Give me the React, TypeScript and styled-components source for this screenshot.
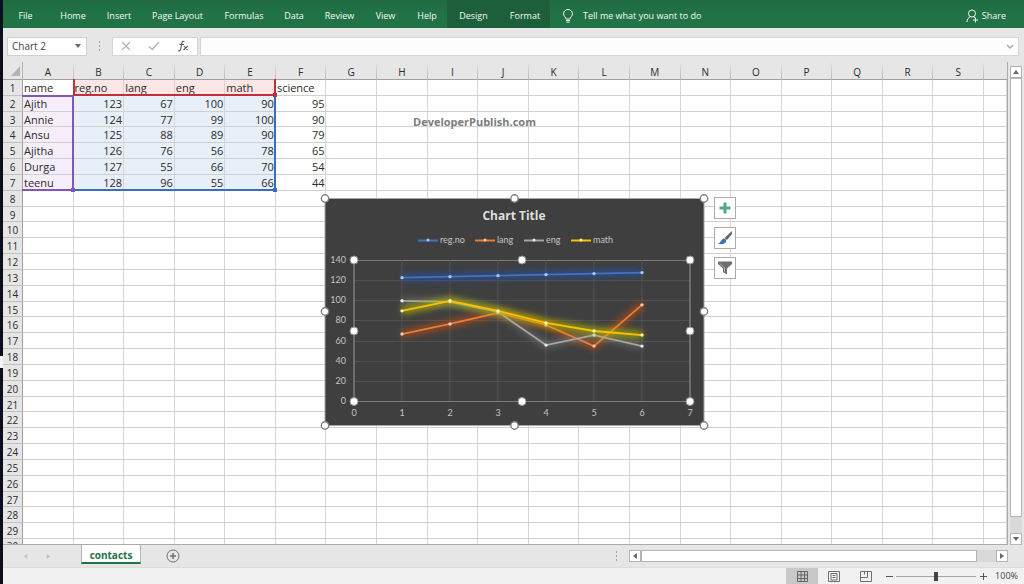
import React from "react";
import styled, { createGlobalStyle, css } from "styled-components";

const ui = `"Open Sans", "Noto Sans", sans-serif`;
const TRACKS = css`
  display: grid;
  grid-template-columns: 20px repeat(19, minmax(0, 1fr)) 23px;
`;
const ROWS = css`
  grid-template-rows: repeat(29, minmax(0, 1fr)) 5px;
`;

const Global = createGlobalStyle`
  * { box-sizing: border-box; }
  body { margin: 0; font-family: ${ui}; background: #e6e6e6; }
  button, input { font-family: inherit; margin: 0; padding: 0; border: 0; background: none; color: inherit; }
`;

const Page = styled.div`
  height: 100vh;
  display: flex;
  padding-left: 3px;
  overflow: hidden;
  background: linear-gradient(#0b0e1c 61%, #f4f4f4 61%, #f4f4f4 63%, #0b0e1c 63%);
`;
const Window = styled.div`
  flex: 1;
  min-width: 0;
  display: flex;
  flex-direction: column;
  background: #e6e6e6;
`;

const Ribbon = styled.nav`
  flex: none;
  height: 28px;
  display: flex;
  align-items: stretch;
  background: linear-gradient(#206b42, #217346 50%);
  color: #f4faf6;
`;
const RibbonTab = styled.button<{ $w: number; $context?: boolean }>`
  width: ${(p) => p.$w}px;
  padding-top: 3px;
  font-size: 9px;
  white-space: nowrap;
  background: ${(p) => (p.$context ? "#1c5f3a" : "none")};
`;
const RibbonAction = styled.button`
  display: flex;
  align-items: center;
  gap: 9px;
  padding: 3px 0 0 12px;
  font-size: 9px;
`;
const ShareAction = styled(RibbonAction)`
  margin-left: auto;
  padding: 3px 18px 0 0;
  gap: 3px;
`;

const FormulaBar = styled.div`
  flex: none;
  height: 34px;
  display: flex;
  align-items: center;
  padding: 2px 5px 0 4px;
`;
const NameBox = styled.div`
  width: 80px;
  height: 19px;
  display: flex;
  align-items: center;
  background: #fff;
  border: 1px solid #cfcfcf;
  color: #444;
`;
const NameInput = styled.input`
  flex: 1;
  min-width: 0;
  padding-left: 4px;
  font-size: 10px;
`;
const DropButton = styled.button`
  width: 16px;
  display: flex;
  justify-content: center;
`;
const Grip = styled.span`
  width: 25px;
  display: flex;
  flex-direction: column;
  align-items: center;
  gap: 2px;
  i { width: 1px; height: 2px; background: #a0a0a0; }
`;
const FormulaTools = styled.div`
  width: 86px;
  height: 19px;
  display: flex;
  align-items: center;
  justify-content: space-around;
  background: #fff;
  border: 1px solid #d4d4d4;
  button { display: flex; }
`;
const FormulaField = styled.div`
  flex: 1;
  height: 19px;
  margin-left: 2px;
  display: flex;
  background: #fdfdfd;
  border: 1px solid #d4d4d4;
  input { flex: 1; min-width: 0; font-size: 11px; }
`;

const Body = styled.main`
  flex: 1;
  min-height: 0;
  display: flex;
`;
const Sheet = styled.div`
  position: relative;
  flex: 1;
  min-width: 0;
  display: flex;
  border-right: 1px solid #ababab;
  border-bottom: 1px solid #ababab;
`;
const Grid = styled.table`
  flex: 1;
  min-width: 0;
  display: flex;
  flex-direction: column;
  font-size: 11px;
  color: #2b2b2b;
`;
const Head = styled.thead`
  flex: none;
  height: 18px;
  display: block;
`;
const HeadRow = styled.tr`
  ${TRACKS}
  height: 18px;
  border-bottom: 1px solid #a0a0a0;
`;
const ColHead = styled.th`
  padding: 2px 0 0;
  font-size: 10px;
  font-weight: 400;
  line-height: 16px;
  text-align: center;
  border-right: 1px solid;
  border-image: linear-gradient(#e6e6e6, #b4b4b4) 1;
`;
const Corner = styled.td`
  padding: 4px 2px 2px 8px;
  border-right: 1px solid #b4b4b4;
  svg { display: block; }
`;
const Rows = styled.tbody`
  flex: 1;
  min-height: 0;
  display: grid;
  ${ROWS}
`;
const Row = styled.tr`
  ${TRACKS}
  min-height: 0;
  overflow: hidden;
`;
const RowHead = styled.th`
  padding: 0;
  font-size: 10px;
  font-weight: 400;
  line-height: 16px;
  text-align: center;
  overflow: hidden;
  background: #e6e6e6;
  border-right: 1px solid #a0a0a0;
  border-bottom: 1px solid #c0c0c0;
  tr:last-child > & { border-bottom: 0; line-height: 14px; }
`;
const fills = { none: "#fff", names: "#f6eefa", heads: "#fde6e6", values: "#e7eff9" };
const Cell = styled.td<{ $fill: keyof typeof fills; $num: boolean }>`
  padding: 0 1px;
  line-height: 16px;
  overflow: hidden;
  white-space: nowrap;
  text-align: ${(p) => (p.$num ? "right" : "left")};
  background: ${(p) => fills[p.$fill]};
  border-right: 1px solid #d6d6d6;
  border-bottom: 1px solid #d0d0d0;
  tr:last-child > & { border-bottom: 0; }
`;

const Overlay = styled.div`
  position: absolute;
  inset: 18px 0 0 0;
  ${TRACKS}
  ${ROWS}
  pointer-events: none;
`;
const RangeMark = styled.div<{ $area: string; $color: string; $sides: string }>`
  position: relative;
  grid-area: ${(p) => p.$area};
  margin: -1px 0 0 -1px;
  border: 0 solid ${(p) => p.$color};
  border-width: ${(p) => p.$sides};
  &::after {
    content: "";
    position: absolute;
    right: -3px;
    bottom: -3px;
    width: 4px;
    height: 4px;
    background: ${(p) => p.$color};
  }
`;
const Watermark = styled.div`
  position: absolute;
  left: 410px;
  top: 52px;
  font: 700 11px/16px ${ui};
  color: #7c7c7c;
`;
const ChartObject = styled.figure`
  position: absolute;
  left: 314px;
  top: 128px;
  margin: 0;
  svg { display: block; }
`;
const ChartTools = styled.div`
  position: absolute;
  left: 711px;
  top: 135px;
  display: flex;
  flex-direction: column;
  gap: 8px;
`;
const ChartTool = styled.button`
  width: 22px;
  height: 22px;
  display: flex;
  align-items: center;
  justify-content: center;
  background: #fff;
  border: 1px solid #ababab;
`;

const VScroll = styled.div`
  width: 16px;
  padding: 4px 2px 0 2px;
  display: flex;
  flex-direction: column;
`;
const ScrollButton = styled.button`
  flex: none;
  width: 12px;
  height: 12px;
  display: flex;
  align-items: center;
  justify-content: center;
  background: #fff;
  border: 1px solid #b4b4b4;
`;
const VTrack = styled.div`
  flex: 1;
  display: flex;
  background: #d9d9d9;
  padding-bottom: 16px;
`;
const Thumb = styled.div`
  flex: 1;
  background: #fff;
  border: 1px solid #b4b4b4;
`;

const TabBar = styled.div`
  flex: none;
  height: 22px;
  display: flex;
  align-items: flex-start;
  padding-right: 16px;
`;
const TabNav = styled.div`
  width: 78px;
  height: 22px;
  display: flex;
  align-items: center;
  gap: 18px;
  padding-left: 20px;
  button { display: flex; }
`;
const SheetTab = styled.button`
  width: 60px;
  height: 20px;
  margin-top: -1px;
  padding-top: 3px;
  background: #fff;
  border-left: 1px solid #b4b4b4;
  border-right: 1px solid #b4b4b4;
  border-bottom: 2px solid #217346;
  color: #217346;
  font-size: 10px;
  line-height: 14px;
  font-weight: 700;
`;
const AddSheet = styled.button`
  margin: 4px 0 0 25px;
  display: flex;
`;
const HScroll = styled.div`
  width: 404px;
  max-width: 45%;
  height: 22px;
  margin-left: auto;
  display: flex;
  align-items: center;
`;
const HTrack = styled.div`
  flex: 1;
  height: 12px;
  display: flex;
  background: #d9d9d9;
  padding-right: 19px;
`;

const StatusBar = styled.footer`
  flex: none;
  height: 17px;
  display: flex;
  justify-content: flex-end;
  background: #f1f1f1;
  color: #444;
  font-size: 9px;
  border-top: 1px solid #dcdcdc;
`;
const ViewButton = styled.button<{ $on?: boolean }>`
  width: 32px;
  display: flex;
  align-items: center;
  justify-content: center;
  background: ${(p) => (p.$on ? "#c8c8c8" : "none")};
`;
const ZoomStep = styled.button`
  width: 14px;
  display: flex;
  align-items: center;
  justify-content: center;
`;
const ZoomSlider = styled.input`
  appearance: none;
  width: 80px;
  &::-webkit-slider-runnable-track {
    height: 11px;
    background: linear-gradient(#a6a6a6, #a6a6a6) center / 100% 1px no-repeat;
  }
  &::-webkit-slider-thumb {
    appearance: none;
    width: 4px;
    height: 9px;
    margin-top: 1px;
    background: #444;
  }
`;
const ZoomValue = styled.span`
  width: 34px;
  padding: 0 6px 0 0;
  line-height: 16px;
  text-align: right;
`;

const tabs: [string, number][] = [
  ["File", 45], ["Home", 50], ["Insert", 42], ["Page Layout", 75], ["Formulas", 58],
  ["Data", 42], ["Review", 49], ["View", 43], ["Help", 40],
];
const header = ["name", "reg.no", "lang", "eng", "math", "science"];
const records: (string | number)[][] = [
  ["Ajith", 123, 67, 100, 90, 95],
  ["Annie", 124, 77, 99, 100, 90],
  ["Ansu", 125, 88, 89, 90, 79],
  ["Ajitha", 126, 76, 56, 78, 65],
  ["Durga", 127, 55, 66, 70, 54],
  ["teenu", 128, 96, 55, 66, 44],
];
const sheetRows = [header, ...records];
const columns = "ABCDEFGHIJKLMNOPQRS".split("");

function fillOf(r: number, c: number): keyof typeof fills {
  if (r > 6 || c > 4) return "none";
  if (c === 0) return r > 0 ? "names" : "none";
  return r === 0 ? "heads" : "values";
}

const Arrow = ({ dir, color = "#666", size = 6 }: { dir: "up" | "down" | "left" | "right"; color?: string; size?: number }) => {
  const d = { up: "M0 5L3 1L6 5Z", down: "M0 1L3 5L6 1Z", left: "M5 0L1 3L5 6Z", right: "M1 0L5 3L1 6Z" }[dir];
  return <svg width={size} height={size} viewBox="0 0 6 6"><path d={d} fill={color} /></svg>;
};

const series = [
  { name: "reg.no", col: 1, line: "#4472c4", glow: "#1f56c4", dot: "#a9c4f5", x: 101, soft: 0.5 },
  { name: "lang", col: 2, line: "#ed7d31", glow: "#d8520c", dot: "#ffc9a3", x: 158, soft: 0.5 },
  { name: "eng", col: 3, line: "#a5a5a5", glow: "#8f8f8f", dot: "#e8e8e8", x: 207, soft: 0.35 },
  { name: "math", col: 4, line: "#ffc000", glow: "#b8c000", dot: "#fff0a0", x: 254, soft: 0.65 },
];
const px = (v: number) => 37 + v * 48;
const py = (v: number) => 211 - v * 1.007;

function Chart() {
  const outer = [8, 197.5, 387].flatMap((x) => [8.5, 121.5, 235.5].map((y) => [x, y])).filter(([x, y]) => !(x === 197.5 && y === 121.5));
  const inner = [37, 205, 373].flatMap((x) => [70, 141, 211.5].map((y) => [x, y])).filter(([x, y]) => !(x === 205 && y === 141));
  return (
    <svg width="396" height="244" viewBox="0 0 396 244" role="img" aria-label="Chart Title" fontFamily={`Lato, "Open Sans", sans-serif`}>
      <defs>
        <filter id="glow" x="0" y="50" width="396" height="180" filterUnits="userSpaceOnUse">
          <feGaussianBlur stdDeviation="3" />
        </filter>
      </defs>
      <rect x="8" y="8.5" width="379" height="227" fill="#3f3f3f" stroke="#a6a6a6" />
      <text x="197" y="30" textAnchor="middle" fontFamily={ui} fontSize="12" fontWeight="700" fill="#dedede">Chart Title</text>
      {series.map((s) => (
        <g key={s.name}>
          <path d={`M${s.x} 50.5h20`} stroke={s.line} strokeWidth="2" />
          <circle cx={s.x + 10} cy="50" r="1.5" fill={s.dot} />
          <text x={s.x + 22} y="53" fontSize="9" fill="#c4c4c4">{s.name}</text>
        </g>
      ))}
      {[0, 20, 40, 60, 80, 100, 120, 140].map((v) => (
        <g key={v}>
          <path d={`M37 ${Math.round(py(v)) + 0.5}H373`} stroke={v === 0 || v === 140 ? "#7c7c7c" : "#505050"} />
          <text x="29" y={Math.round(py(v)) + 3} textAnchor="end" fontSize="9" fill="#c4c4c4">{v}</text>
        </g>
      ))}
      {[0, 1, 2, 3, 4, 5, 6, 7].map((v) => (
        <g key={v}>
          <path d={`M${px(v)} 70V211`} stroke={v === 0 || v === 7 ? "#9a9a9a" : "#555"} />
          <text x={px(v)} y="226" textAnchor="middle" fontSize="9" fill="#c4c4c4">{v}</text>
        </g>
      ))}
      {series.map((s) => {
        const pts = records.map((r, i) => [px(i + 1), py(Number(r[s.col])) + 0.5]);
        const list = pts.map((p) => p.join(",")).join(" ");
        return (
          <g key={s.name} fill="none" strokeLinejoin="round">
            <polyline points={list} stroke={s.glow} strokeWidth="8" opacity={s.soft} filter="url(#glow)" />
            <polyline points={list} stroke={s.line} strokeWidth="1.8" />
            {pts.map(([x, y]) => <circle key={x} cx={x} cy={y} r="1.7" fill={s.dot} />)}
          </g>
        );
      })}
      {inner.map(([x, y]) => <circle key={`${x}-${y}`} cx={x} cy={y} r="4" fill="#fff" stroke="#8c8c8c" />)}
      {outer.map(([x, y]) => <circle key={`${x}-${y}`} cx={x} cy={y} r="3.7" fill="#fff" stroke="#828282" strokeWidth="1.4" />)}
    </svg>
  );
}

export default function App() {
  return (
    <>
      <Global />
      <Page>
        <Window>
          <Ribbon>
            {tabs.map(([label, w]) => <RibbonTab key={label} $w={w}>{label}</RibbonTab>)}
            <RibbonTab $w={53} $context>Design</RibbonTab>
            <RibbonTab $w={50} $context>Format</RibbonTab>
            <RibbonAction>
              <svg width="12" height="14" viewBox="0 0 12 14" fill="none" stroke="currentColor">
                <path d="M4 10C4 8 1.5 7.500 1.500 4.800A4.500 4.300 0 0 1 10.500 4.800C10.500 7.500 8 8 8 10ZM4 11.500h4M4.500 13.200h3" />
              </svg>
              Tell me what you want to do
            </RibbonAction>
            <ShareAction>
              <svg width="13" height="14" viewBox="0 0 13 14" fill="none" stroke="currentColor">
                <circle cx="6" cy="4.500" r="3.500" />
                <path d="M1 13C1 10 2.500 8.500 4.500 7.800M7.500 7.800L9 8.800M9.500 8.500v5M7 11h5" />
              </svg>
              Share
            </ShareAction>
          </Ribbon>

          <FormulaBar>
            <NameBox>
              <NameInput aria-label="Name box" defaultValue="Chart 2" />
              <DropButton aria-label="Choose name"><Arrow dir="down" /></DropButton>
            </NameBox>
            <Grip><i /><i /><i /></Grip>
            <FormulaTools>
              <button aria-label="Cancel"><svg width="10" height="10" viewBox="0 0 10 10" stroke="#b4b4b4" strokeWidth="1.300"><path d="M1 1L9 9M9 1L1 9" /></svg></button>
              <button aria-label="Enter"><svg width="12" height="10" viewBox="0 0 12 10" fill="none" stroke="#b4b4b4" strokeWidth="1.500"><path d="M1 5.500L4.300 8.500L11 1" /></svg></button>
              <button aria-label="Insert function">
                <svg width="12" height="12" viewBox="0 0 12 12" fill="none" stroke="#555" strokeWidth="1.100">
                  <path d="M7.500 1.500C5.800 .6 5 1.800 4.700 3.500L3.700 9C3.400 10.800 2.400 11.300 1 10.600M2.500 4.500H7M7 6L10.500 10M10.800 6L6.500 10" />
                </svg>
              </button>
            </FormulaTools>
            <FormulaField>
              <input aria-label="Formula" />
              <DropButton aria-label="Expand formula bar">
                <svg width="8" height="17" viewBox="0 0 8 17" fill="none" stroke="#a6a6a6" strokeWidth="1.300"><path d="M1 7L4 10L7 7" /></svg>
              </DropButton>
            </FormulaField>
          </FormulaBar>

          <Body>
            <Sheet>
              <Grid>
                <Head>
                  <HeadRow>
                    <Corner><svg width="9" height="10" viewBox="0 0 9 10"><path d="M9 0V10H0Z" fill="#b4b4b4" /></svg></Corner>
                    {columns.map((c) => <ColHead key={c} scope="col">{c}</ColHead>)}
                  </HeadRow>
                </Head>
                <Rows>
                  {Array.from({ length: 30 }, (_, r) => (
                    <Row key={r}>
                      <RowHead scope="row">{r + 1}</RowHead>
                      {Array.from({ length: 20 }, (_, c) => {
                        const value = sheetRows[r]?.[c];
                        return <Cell key={c} $fill={fillOf(r, c)} $num={typeof value === "number"}>{value}</Cell>;
                      })}
                    </Row>
                  ))}
                </Rows>
              </Grid>
              <Overlay>
                <RangeMark $area="2 / 3 / 8 / 7" $color="#3a6cc0" $sides="0 2px 2px 0" />
                <RangeMark $area="2 / 2 / 8 / 3" $color="#8455b8" $sides="2px 2px 2px 0" />
                <RangeMark $area="1 / 3 / 2 / 7" $color="#c02f3c" $sides="0 2px 2px 2px" />
              </Overlay>
              <Watermark>DeveloperPublish.com</Watermark>
              <ChartObject><Chart /></ChartObject>
              <ChartTools>
                <ChartTool aria-label="Chart elements">
                  <svg width="12" height="12" viewBox="0 0 12 12"><path d="M4.500 .5h3v4h4v3h-4v4h-3v-4h-4v-3h4Z" fill="#4fa886" /></svg>
                </ChartTool>
                <ChartTool aria-label="Chart styles">
                  <svg width="16" height="16" viewBox="0 0 16 16">
                    <path d="M14.800 1L15 4L10 10L7.500 8Z" fill="#666" />
                    <path d="M7 8.500C9 9 9.800 10.500 9 12C7.500 14.500 4 14.500 1 13.800C3.500 13 4 9 7 8.500Z" fill="#3878b8" />
                  </svg>
                </ChartTool>
                <ChartTool aria-label="Chart filters">
                  <svg width="16" height="14" viewBox="0 0 16 14"><path d="M1 .5H15V3L10 7.500V13.500L6 11V7.500L1 3Z" fill="#6e6e6e" /><path d="M3 2.500L7.500 7V10.500" fill="none" stroke="#b8b8b8" /></svg>
                </ChartTool>
              </ChartTools>
            </Sheet>
            <VScroll>
              <ScrollButton aria-label="Scroll up"><Arrow dir="up" /></ScrollButton>
              <VTrack><Thumb /></VTrack>
              <ScrollButton aria-label="Scroll down"><Arrow dir="down" /></ScrollButton>
            </VScroll>
          </Body>

          <TabBar>
            <TabNav>
              <button aria-label="Previous sheet"><Arrow dir="left" color="#c0c0c0" size={5} /></button>
              <button aria-label="Next sheet"><Arrow dir="right" color="#c0c0c0" size={5} /></button>
            </TabNav>
            <SheetTab>contacts</SheetTab>
            <AddSheet aria-label="New sheet">
              <svg width="14" height="14" viewBox="0 0 14 14" fill="none" stroke="#707070"><circle cx="7" cy="7" r="6" /><path d="M7 4v6M4 7h6" strokeWidth="1.500" /></svg>
            </AddSheet>
            <HScroll>
              <Grip><i /><i /><i /></Grip>
              <ScrollButton aria-label="Scroll left"><Arrow dir="left" /></ScrollButton>
              <HTrack><Thumb /></HTrack>
              <ScrollButton aria-label="Scroll right"><Arrow dir="right" /></ScrollButton>
            </HScroll>
          </TabBar>

          <StatusBar>
            <ViewButton $on aria-label="Normal view">
              <svg width="11" height="11" viewBox="0 0 11 11" fill="none" stroke="#666"><path d="M.5 .5h10v10H.5ZM4 .5v10M7.500 .5v10M.5 4h10M.5 7.500h10" /></svg>
            </ViewButton>
            <ViewButton aria-label="Page layout view">
              <svg width="12" height="11" viewBox="0 0 12 11" fill="none" stroke="#707070"><path d="M.5 .5h11v10H.5ZM3 2.500h6v6.500H3ZM4.500 4.500h3M4.500 6.500h3" /></svg>
            </ViewButton>
            <ViewButton aria-label="Page break view">
              <svg width="12" height="11" viewBox="0 0 12 11" fill="none" stroke="#707070"><path d="M.5 .5h11v10H.5ZM.5 6.500h7V.5M4.500 .5v3" /></svg>
            </ViewButton>
            <ZoomStep aria-label="Zoom out"><svg width="7" height="7" stroke="#555"><path d="M0 3.500h7" /></svg></ZoomStep>
            <ZoomSlider type="range" min="10" max="190" defaultValue="100" aria-label="Zoom" />
            <ZoomStep aria-label="Zoom in"><svg width="7" height="7" stroke="#555"><path d="M0 3.500h7M3.500 0v7" /></svg></ZoomStep>
            <ZoomValue>100%</ZoomValue>
          </StatusBar>
        </Window>
      </Page>
    </>
  );
}
